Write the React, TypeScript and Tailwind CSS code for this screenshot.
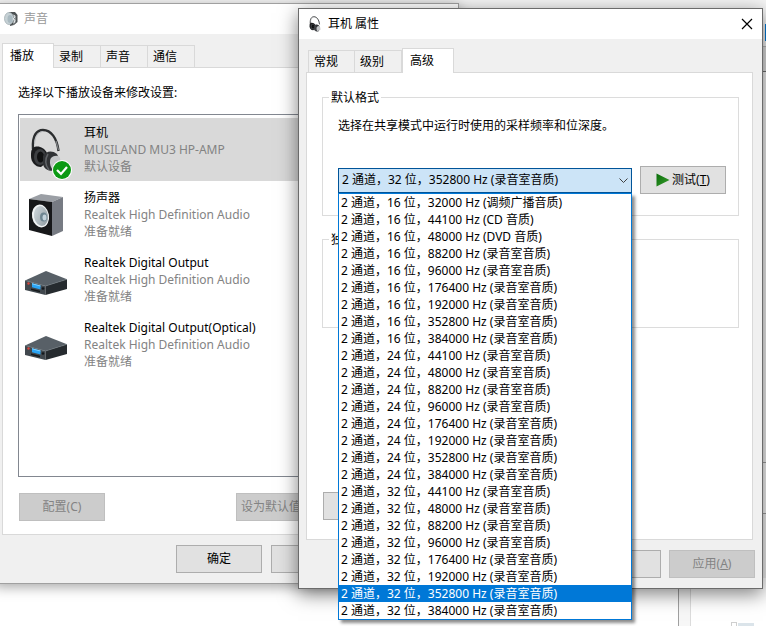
import React, { useState } from "react";

type Device = {
  name: string;
  driver: string;
  status: string;
  icon: "headphones" | "speaker" | "receiver";
  isDefault?: boolean;
};

const devices: Device[] = [
  {
    name: "耳机",
    driver: "MUSILAND MU3 HP-AMP",
    status: "默认设备",
    icon: "headphones",
    isDefault: true,
  },
  {
    name: "扬声器",
    driver: "Realtek High Definition Audio",
    status: "准备就绪",
    icon: "speaker",
  },
  {
    name: "Realtek Digital Output",
    driver: "Realtek High Definition Audio",
    status: "准备就绪",
    icon: "receiver",
  },
  {
    name: "Realtek Digital Output(Optical)",
    driver: "Realtek High Definition Audio",
    status: "准备就绪",
    icon: "receiver",
  },
];

const formats = [
  "2 通道，16 位，32000 Hz (调频广播音质)",
  "2 通道，16 位，44100 Hz (CD 音质)",
  "2 通道，16 位，48000 Hz (DVD 音质)",
  "2 通道，16 位，88200 Hz (录音室音质)",
  "2 通道，16 位，96000 Hz (录音室音质)",
  "2 通道，16 位，176400 Hz (录音室音质)",
  "2 通道，16 位，192000 Hz (录音室音质)",
  "2 通道，16 位，352800 Hz (录音室音质)",
  "2 通道，16 位，384000 Hz (录音室音质)",
  "2 通道，24 位，44100 Hz (录音室音质)",
  "2 通道，24 位，48000 Hz (录音室音质)",
  "2 通道，24 位，88200 Hz (录音室音质)",
  "2 通道，24 位，96000 Hz (录音室音质)",
  "2 通道，24 位，176400 Hz (录音室音质)",
  "2 通道，24 位，192000 Hz (录音室音质)",
  "2 通道，24 位，352800 Hz (录音室音质)",
  "2 通道，24 位，384000 Hz (录音室音质)",
  "2 通道，32 位，44100 Hz (录音室音质)",
  "2 通道，32 位，48000 Hz (录音室音质)",
  "2 通道，32 位，88200 Hz (录音室音质)",
  "2 通道，32 位，96000 Hz (录音室音质)",
  "2 通道，32 位，176400 Hz (录音室音质)",
  "2 通道，32 位，192000 Hz (录音室音质)",
  "2 通道，32 位，352800 Hz (录音室音质)",
  "2 通道，32 位，384000 Hz (录音室音质)",
];

const HeadphonesIcon = ({ className }: { className: string }) => (
  <svg viewBox="0 0 32 44" className={className} aria-hidden="true">
    <path
      d="M3 21C2 7 7 2 13 2c8 0 14 8 15.500 21"
      fill="none"
      stroke="#2b2d2f"
      strokeWidth="2.4"
    />
    <path d="M4.500 16C5 8 8 4 13 3.400" fill="none" stroke="#b4b8bb" strokeWidth="1" />
    <path d="M26 13l2.500 9" stroke="#808386" strokeWidth="1.200" />
    <path d="M3 20c4-3 11-1 14 5l-1 10-5 4C5 39 1 34 1 28c0-4 0-6 2-8z" fill="#1b1c1e" />
    <ellipse cx="10" cy="29" rx="6" ry="8" fill="#3d3f42" />
    <ellipse cx="10.500" cy="29" rx="3.500" ry="5.500" fill="#101112" />
    <path d="M13 28c3-5 9-6 14-2l3 7-4 9c-6 2-12 0-13-6z" fill="#303235" />
    <path d="M18 26c-3 5-3 11 1 16" fill="none" stroke="#606367" strokeWidth="1.500" />
    <path d="M21 30c3-3 8-3 9 0l1 8-8 4c-3-3-4-9-2-12z" fill="#c4c6c8" />
  </svg>
);

const SpeakerIcon = ({ className }: { className: string }) => (
  <svg viewBox="0 0 36 44" className={className} aria-hidden="true">
    <defs>
      <linearGradient id="cone" x1="0" y1="0" x2="1" y2="1">
        <stop offset="0" stopColor="#d5dde1" />
        <stop offset="1" stopColor="#8c989f" />
      </linearGradient>
    </defs>
    <path d="M1 6L13 1l22 3-11 5z" fill="#9b9fa5" />
    <path d="M24 9l11-5v34l-11 5z" fill="#777b83" />
    <path d="M1 6l23 3v34L1 37z" fill="#17181a" />
    <ellipse cx="12.500" cy="23" rx="8.500" ry="11.500" fill="#f0f3f4" transform="rotate(-10 12.500 23)" />
    <ellipse cx="13" cy="23" rx="7" ry="10" fill="url(#cone)" transform="rotate(-10 13 23)" />
    <ellipse cx="15.500" cy="24" rx="3.500" ry="4.500" fill="#6d8591" />
    <ellipse cx="16.500" cy="24.500" rx="2" ry="3" fill="#c3d3dc" />
  </svg>
);

const ReceiverIcon = ({ className }: { className: string }) => (
  <svg viewBox="0 0 42 24" className={className} aria-hidden="true">
    <path d="M0 9.500L21 0l21 8.300L20.500 15z" fill="#586067" />
    <path d="M0 9.500L20.500 15v9L0 19z" fill="#41484e" />
    <path d="M20.500 15L42 8.300V18l-21.500 6z" fill="#262b2f" />
    <path d="M0 9.500L20.500 15 42 8.300" fill="none" stroke="#747d84" strokeWidth="0.600" />
    <path d="M7 12.200l8.500 2.300v4L7 16.300z" fill="#2aa4f4" />
    <path d="M7 12.200l8.500 2.300v1L7 13.200z" fill="#7fd0ff" />
    <path d="M6 17.500l9 2.300v1.500L6 19z" fill="#15181a" />
    <circle cx="3.500" cy="12.500" r="1.200" fill="#d9433b" />
    <circle cx="18" cy="17.500" r="1.300" fill="#14171a" />
  </svg>
);

const icons = {
  headphones: <HeadphonesIcon className="h-11 w-8" />,
  speaker: <SpeakerIcon className="h-11 w-9" />,
  receiver: <ReceiverIcon className="mt-1.5 h-6 w-[42px]" />,
};

const WinButton: React.FC<
  React.ButtonHTMLAttributes<HTMLButtonElement>
> = ({ children, ...props }) => (
  <button
    type="button"
    className="flex h-7 w-[86px] shrink-0 items-center justify-center whitespace-nowrap border border-[#adadad] bg-[#e1e1e1] disabled:border-[#bfbfbf] disabled:bg-[#cccccc] disabled:text-[#838383]"
    {...props}
  >
    {children}
  </button>
);

const Tabs = ({ tabs, active }: { tabs: string[]; active: string }) => {
  return (
    <div role="tablist" className="relative z-10 -mb-px flex items-end">
      {tabs.map((tab, index) => (
        <button
          key={tab}
          type="button"
          role="tab"
          aria-selected={tab === active}
          className={
            tab === active
              ? "h-[25px] w-[52px] border border-b-0 border-[#d9d9d9] bg-white pl-[7px] text-left"
              : `h-[23px] w-[47px] border-y border-r border-[#d9d9d9] bg-[#f0f0f0] pl-[5px] text-left ${
                  index === 0 ? "ml-0.5 border-l" : ""
                }`
          }
        >
          {tab}
        </button>
      ))}
    </div>
  );
};

const SoundWindow = () => {
  return (
    <section
      aria-label="声音"
      className="absolute top-[3px] -left-1.5 w-[465px] border border-[#a0a0a0] bg-[#f0f0f0] shadow-[0_3px_12px_rgba(0,0,0,0.35)]"
    >
      <header className="flex h-[30px] items-center gap-1.5 bg-white pl-[9px] text-[#999999]">
        <svg viewBox="0 0 14 16" className="h-4 w-3.5" aria-hidden="true">
          <path d="M5 1l6 0 2.500 3v7L10 14l-4 1z" fill="#4e5355" />
          <path d="M9 3l3 2v6l-3 3z" fill="#858b8d" />
          <ellipse cx="5" cy="7.500" rx="4.500" ry="6" fill="#c6d1d5" stroke="#a5b0b5" strokeWidth="0.800" />
          <ellipse cx="6" cy="8" rx="2.500" ry="4" fill="#a9b9c0" />
          <path d="M10 4l1 2-2 2 2 1-1 3" fill="none" stroke="#e4e9eb" />
        </svg>
        <h1>声音</h1>
      </header>

      <div className="pt-[9px] pr-1.5 pb-2.5 pl-[7px]">
        <Tabs tabs={["播放", "录制", "声音", "通信"]} active="播放" />
        <div className="border border-[#d9d9d9] bg-white px-[15px] pt-4 pb-[13px]">
          <p className="leading-[17px]">选择以下播放设备来修改设置:</p>
          <ul className="mt-[13px] flex h-[363px] flex-col gap-0.5 border border-[#828790] py-[3px] pr-px pl-px">
            {devices.map((device) => (
              <li
                key={device.name}
                className={`flex items-center py-1.5 ${
                  device.isDefault ? "bg-[#d9d9d9]" : ""
                }`}
              >
                <div className="relative mr-3 flex h-11 w-13 items-center justify-center">
                  {icons[device.icon]}
                  {device.isDefault && (
                    <svg
                      viewBox="0 0 20 20"
                      className="absolute right-0 -bottom-2 size-5"
                      aria-hidden="true"
                    >
                      <circle cx="10" cy="10" r="10" fill="#ffffff" />
                      <circle cx="10" cy="10" r="9" fill="#0c9a14" />
                      <path d="M5 10l4 4 6-7" fill="none" stroke="#ffffff" strokeWidth="2.200" />
                    </svg>
                  )}
                </div>
                <div className="leading-[17px] text-[#838383]">
                  <p className="text-black">{device.name}</p>
                  <p>{device.driver}</p>
                  <p>{device.status}</p>
                </div>
              </li>
            ))}
          </ul>
          <div className="mt-4 flex pl-px">
            <WinButton disabled>配置(C)</WinButton>
            <div className="ml-auto flex gap-2 pr-5">
              <button
                type="button"
                disabled
                className="h-7 w-[86px] overflow-hidden border border-[#bfbfbf] bg-[#cccccc] pl-1 text-left whitespace-nowrap text-[#838383]"
              >
                设为默认值
              </button>
              <WinButton disabled aria-label="属性" />
            </div>
          </div>
        </div>
        <div className="mt-2.5 flex justify-end gap-[9px]">
          <WinButton>确定</WinButton>
          <WinButton aria-label="取消" />
          <WinButton disabled aria-label="应用" />
        </div>
      </div>
    </section>
  );
};

const FormatPicker = () => {
  const [format, setFormat] = useState(23);

  return (
    <div className="relative min-w-0 flex-1">
      <select
        aria-label="默认格式"
        value={format}
        onChange={(e) => setFormat(Number(e.target.value))}
        className="block h-[25px] w-full appearance-none border border-[#005499] bg-[#cce4f7] px-[3px]"
      >
        {formats.map((item, index) => (
          <option key={item} value={index}>
            {item}
          </option>
        ))}
      </select>
      <svg
        viewBox="0 0 9 5"
        className="pointer-events-none absolute top-2.5 right-1 h-[5px] w-[9px]"
        aria-hidden="true"
      >
        <path d="M0.500 0.500l4 4 4-4" fill="none" stroke="#404040" />
      </svg>
      <ul
        role="listbox"
        aria-label="默认格式"
        className="absolute inset-x-0 top-full z-20 border border-[#0078d7] bg-white leading-[17px] shadow-[3px_3px_3px_rgba(0,0,0,0.45)]"
      >
        {formats.map((item, index) => (
          <li
            key={item}
            role="option"
            aria-selected={index === format}
            onClick={() => setFormat(index)}
            className={`pl-0.5 whitespace-nowrap ${
              index === format ? "bg-[#0078d7] text-white" : ""
            }`}
          >
            {item}
          </li>
        ))}
      </ul>
    </div>
  );
};

const PropertiesWindow = () => {
  return (
    <section
      aria-label="耳机 属性"
      className="absolute top-2 right-[3px] left-[298px] border border-[#6b6b6b] bg-[#f0f0f0] shadow-[0_5px_18px_rgba(0,0,0,0.5)]"
    >
      <header className="flex h-[30px] items-center gap-1.5 bg-white px-[9px]">
        <HeadphonesIcon className="h-4 w-3.5" />
        <h2>耳机 属性</h2>
        <button type="button" aria-label="关闭" className="ml-auto">
          <svg viewBox="0 0 12 12" className="size-3" aria-hidden="true">
            <path d="M1 1l10 10M11 1L1 11" stroke="#000000" strokeWidth="1.200" />
          </svg>
        </button>
      </header>

      <div className="px-[7px] pt-[9px] pb-2.5">
        <Tabs tabs={["常规", "级别", "高级"]} active="高级" />
        <div className="mr-0.5 flex h-[468px] flex-col border border-[#d9d9d9] bg-white pt-4 pr-[13px] pb-[19px] pl-[15px]">
          <fieldset className="h-[127px] border border-[#dcdcdc] pr-3 pl-[15px]">
            <legend className="-ml-[9px] px-0.5 leading-[17px]">默认格式</legend>
            <p className="mt-[11px] leading-[17px]">
              选择在共享模式中运行时使用的采样频率和位深度。
            </p>
            <div className="mt-8 flex items-center gap-2">
              <FormatPicker />
              <WinButton>
                <svg viewBox="0 0 14 14" className="mr-0.5 size-3.5" aria-hidden="true">
                  <defs>
                    <linearGradient id="play" x1="0" y1="0" x2="1" y2="1">
                      <stop offset="0" stopColor="#0a6d0a" />
                      <stop offset="1" stopColor="#3a9e2e" />
                    </linearGradient>
                  </defs>
                  <path d="M0.500 0.500v13L13.500 7z" fill="url(#play)" />
                </svg>
                <span>
                  测试(<u>T</u>)
                </span>
              </WinButton>
            </div>
          </fieldset>
          <fieldset className="mt-[15px] h-[97px] border border-[#dcdcdc] px-[15px]">
            <legend className="-ml-[9px] px-0.5 leading-[17px]">独占模式</legend>
          </fieldset>
          <div className="mt-auto pl-px">
            <WinButton aria-label="还原默认值" />
          </div>
        </div>
        <div className="mt-2.5 flex justify-end gap-2">
          <WinButton aria-label="确定" />
          <WinButton aria-label="取消" />
          <WinButton disabled>
            应用(<u>A</u>)
          </WinButton>
        </div>
      </div>
    </section>
  );
};

export default function App() {
  return (
    <main className="relative min-h-screen overflow-hidden bg-white font-['Noto_Sans','Noto_Sans_CJK_SC',sans-serif] text-xs text-black">
      {/* Windows behind the two dialogs */}
      <div className="absolute inset-x-0 top-0 h-8 bg-[#f5f5f5]" />
      <div className="absolute top-6 right-0 flex h-[564px] w-3 flex-col bg-[#f0f0f0]">
        <div className="h-[17px] w-full border-r border-[#0078d7]" />
        <div className="mt-[5px] h-[26px] border-t border-b border-t-[#b8b8b8] border-b-[#707070] bg-[#dddddd]" />
        <div className="h-[390px] bg-[#f0f0f0]" />
        <div className="h-[52px] border-y border-[#a0a0a0] bg-[#f5f5f5]" />
      </div>
      <div className="absolute right-0 bottom-0 h-12 w-[88px] border-l border-[#a0a0a0] bg-[#f7f7f7] pl-[11px]">
        <div className="flex h-full items-end gap-px border-l border-[#dcdcdc] bg-white pl-10">
          <div className="h-1 w-1.5 border border-b-0 border-[#cfcfcf]" />
          <div className="h-[3px] w-4 bg-[#dbe4ea]" />
        </div>
      </div>
      <SoundWindow />
      <PropertiesWindow />
    </main>
  );
}
